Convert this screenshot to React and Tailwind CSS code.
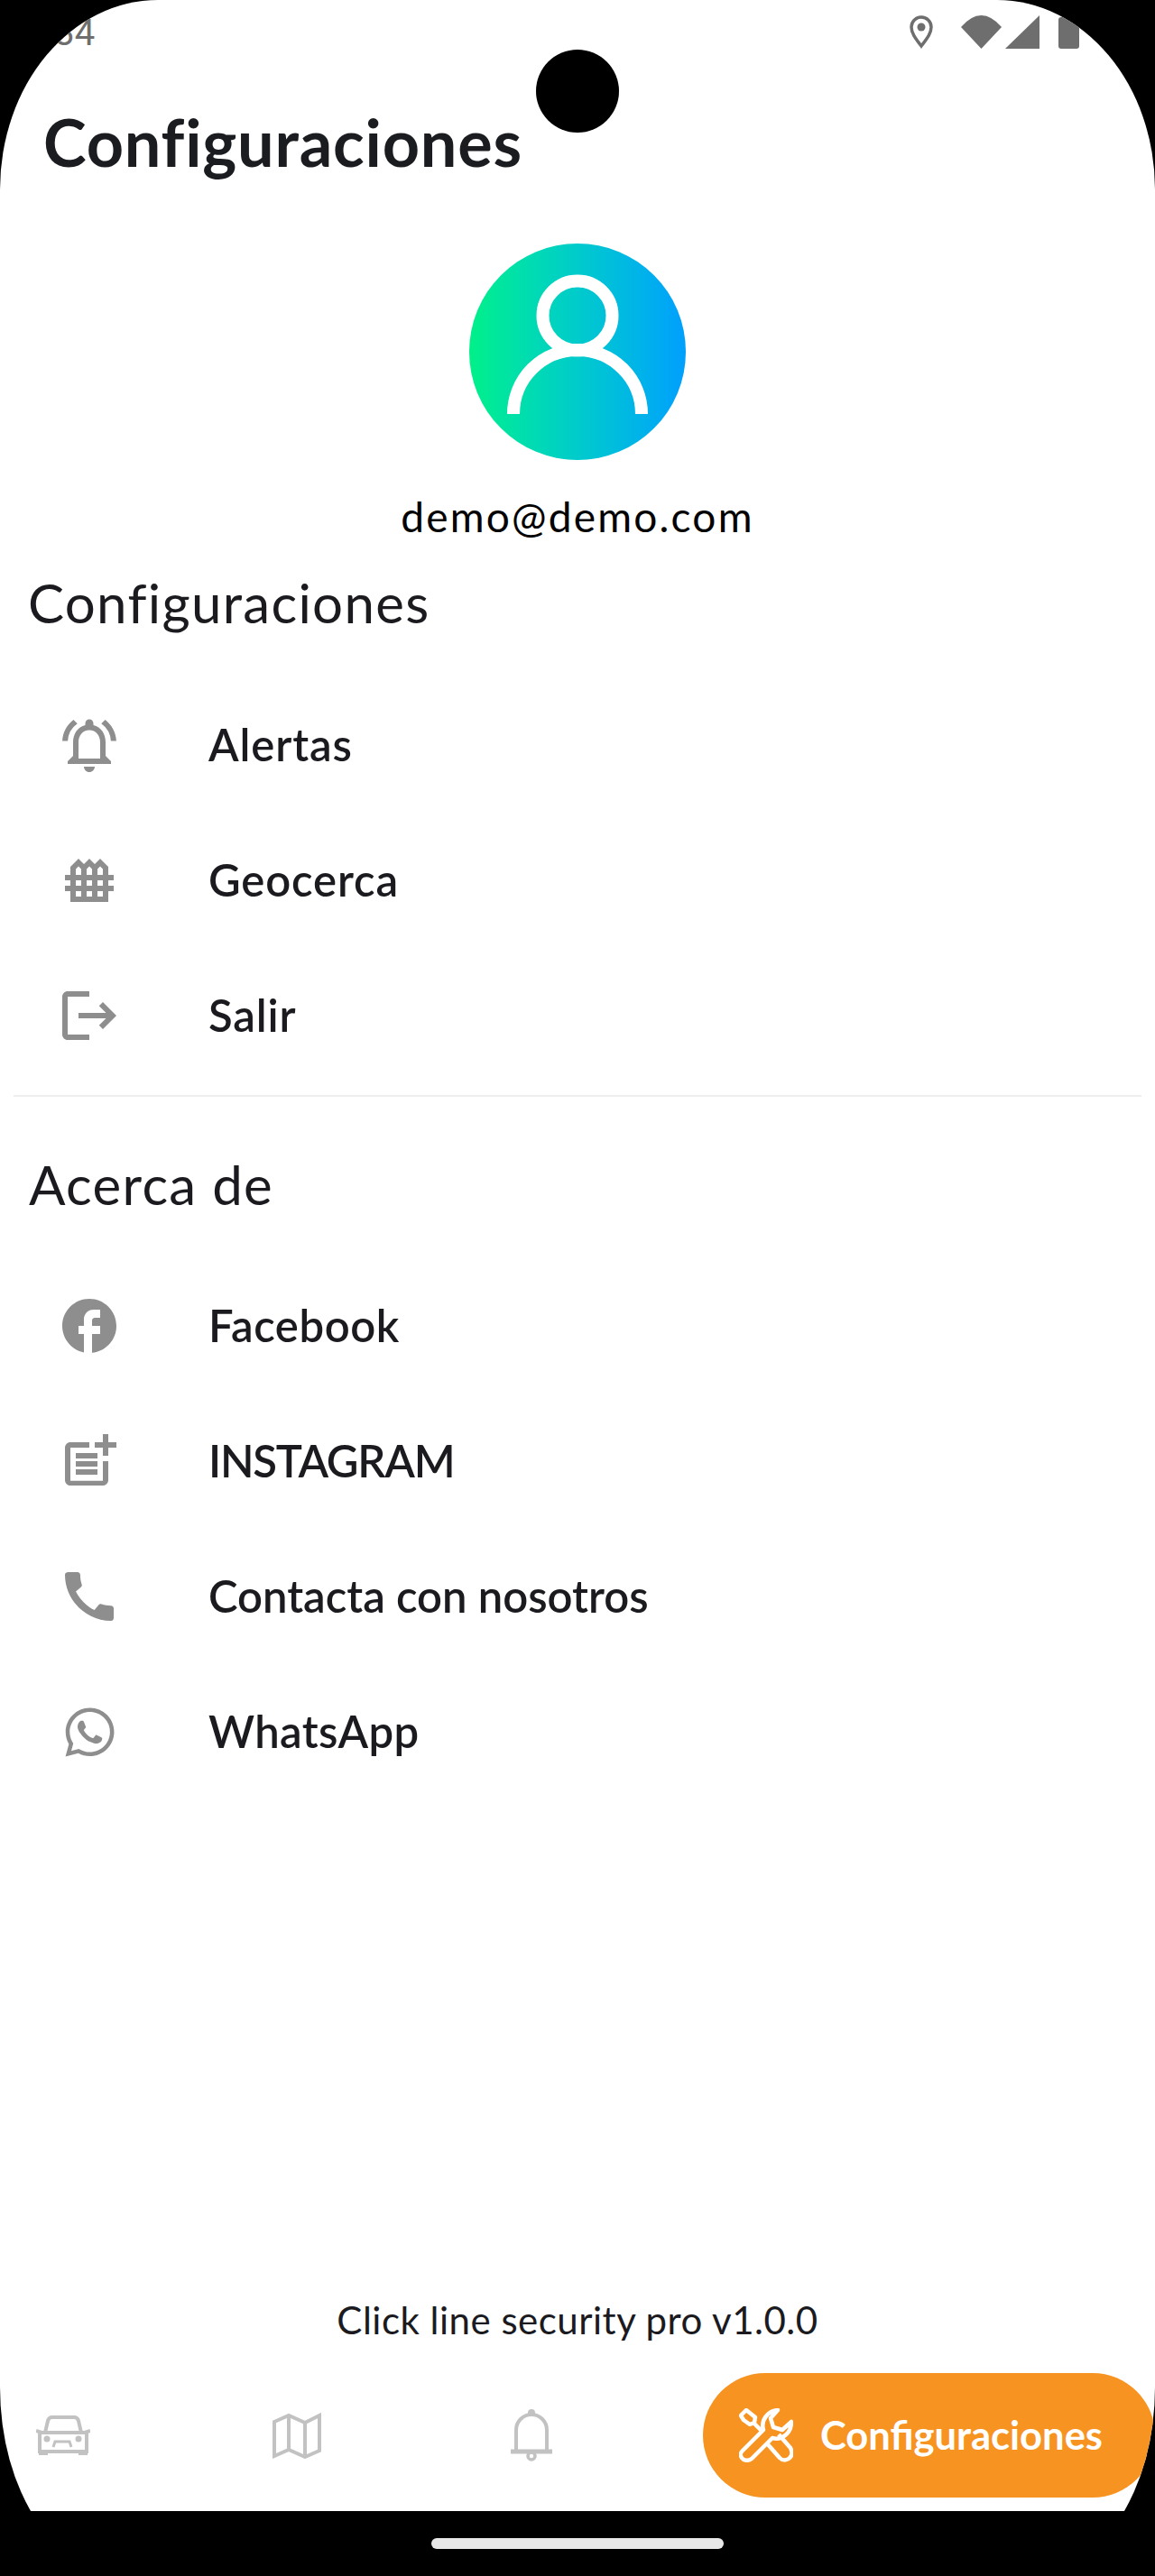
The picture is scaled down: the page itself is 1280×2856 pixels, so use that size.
import React from 'react';
import {
    MdOutlineNotificationsActive,
    MdFence,
    MdLogout,
    MdFacebook,
    MdOutlinePostAdd,
    MdCall,
    MdWhatsapp,
} from 'react-icons/md';

const settingsRows = [
    { label: 'Alertas', Icon: MdOutlineNotificationsActive },
    { label: 'Geocerca', Icon: MdFence },
    { label: 'Salir', Icon: MdLogout },
];

const aboutRows = [
    { label: 'Facebook', Icon: MdFacebook, spacing: 'tracking-[0.6px]' },
    { label: 'INSTAGRAM', Icon: MdOutlinePostAdd, spacing: 'tracking-[-1.2px]' },
    { label: 'Contacta con nosotros', Icon: MdCall, spacing: 'tracking-[0px]' },
    { label: 'WhatsApp', Icon: MdWhatsapp, iconSize: 65, spacing: 'tracking-[0.4px]' },
];

const Row = ({ label, Icon, iconSize = 72, spacing = 'tracking-[0.9px]' }) => (
    <div className="flex h-[150px] items-center pl-[63px]">
        <div className="flex w-[72px] shrink-0 justify-center">
            <Icon size={iconSize} className="text-[#8e8e8e]" />
        </div>
        <span className={`ml-[96px] pb-[2px] text-[49px] leading-[60px] font-semibold text-[#1b1b1f] ${spacing}`}>{label}</span>
    </div>
);

const StatusBar = () => (
    <div className="flex h-[110px] items-start pl-[28px] pr-[84px] pt-[17px] text-[#6e6e6e]">
        <span className="[font-family:Roboto,sans-serif] text-[40px] leading-[40px]">1:34</span>
        <svg viewBox="0 0 26 37" className="ml-auto w-[26px] h-[37px]">
            <path d="M13 34 C7 26 2 20 2 13 A11 11 0 0 1 24 13 C24 20 19 26 13 34Z" fill="none" stroke="#6e6e6e" strokeWidth="3.5" />
            <circle cx="13" cy="13" r="4.5" fill="#6e6e6e" />
        </svg>
        <svg viewBox="0 0 45 37" className="ml-[31px] w-[45px] h-[37px]">
            <path d="M0 13 Q22.5 -13 45 13 L22.5 37Z" fill="#6e6e6e" />
        </svg>
        <svg viewBox="0 0 38 37" className="ml-[4px] w-[38px] h-[37px]">
            <path d="M38 0 V37 H0Z" fill="#6e6e6e" />
        </svg>
        <div className="ml-[21px] mt-[2px] w-[23px] h-[35px] rounded-[3px] bg-[#6e6e6e]" />
    </div>
);

const CarIcon = () => (
    <svg viewBox="0 0 60 44" className="w-[60px] h-[44px]" fill="none" stroke="#c2c2c2" strokeWidth="4">
        <path d="M10 19 L13 6 Q14 2 18 2 H42 Q46 2 47 6 L50 19" />
        <path d="M0 17 L6 19 H54 L60 17" />
        <path d="M4 18 V40 H56 V18" />
        <path d="M3 41 H13 M47 41 H57" strokeWidth="6" />
        <circle cx="12" cy="26" r="3.5" fill="#c2c2c2" stroke="none" />
        <circle cx="47" cy="26" r="3.5" fill="#c2c2c2" stroke="none" />
        <path d="M19 35 L21 29 H37 L39 35" strokeWidth="3" />
    </svg>
);

const MapIcon = () => (
    <svg viewBox="0 0 54 51" className="w-[54px] h-[51px]" fill="none" stroke="#c2c2c2" strokeWidth="4">
        <path d="M2 10 L18 3 L36 11 L52 3 V42 L36 49 L18 41 L2 48Z" />
        <path d="M18 3 V41 M36 11 V49" />
    </svg>
);

const BellIcon = () => (
    <svg viewBox="0 0 46 58" className="w-[46px] h-[58px]" fill="none" stroke="#c2c2c2" strokeWidth="4">
        <circle cx="23" cy="4" r="4" fill="#c2c2c2" stroke="none" />
        <path d="M6 47 V23 A17 17 0 0 1 40 23 V47" />
        <path d="M0 47 H46" strokeWidth="5" />
        <circle cx="23" cy="52" r="4" strokeWidth="3.5" />
    </svg>
);

const ToolsIcon = () => (
    <svg viewBox="0 0 60 60" className="w-[60px] h-[60px] shrink-0" fill="none" stroke="#fff" strokeWidth="4.5" strokeLinejoin="round">
        <path d="M4 47 L27 24 C24 14 31 3 43 2 L35 11 L38 21 L48 24 L58 15 C58 28 47 36 37 33 L14 56 C10 59 5 58 3 55 C1 52 1 50 4 47Z" />
        <path d="M2 8 L8 2 L18 10 L17 16 L12 18 L5 13Z" />
        <path d="M15 15 L26 26" />
        <path d="M44 29 L57 44 C60 50 58 54 55 56 C52 58 48 58 45 55 L31 39" />
    </svg>
);

const App = () => {
    return (
        <div className="h-[2856px] bg-black [font-family:Lato,sans-serif]">
            <div className="relative h-[2784px] overflow-hidden">
                <div className="flex h-[2856px] flex-col bg-white pb-[72px] rounded-tl-[175px_210px] rounded-tr-[175px_210px] rounded-bl-[139px_209px] rounded-br-[139px_209px] overflow-hidden">
                    <StatusBar />

                    <h1 className="flex h-[94px] items-center pl-[48px] text-[72px] font-bold text-[#1b1c20] tracking-[0.8px]">
                        Configuraciones
                    </h1>

                    <div className="mt-[66px] flex flex-col items-center">
                        <div className="h-[240px] w-[240px] rounded-full bg-gradient-to-r from-[#00f088] to-[#009ffd]">
                            <svg viewBox="0 0 240 240" className="h-[240px] w-[240px]" fill="none" stroke="#fff" strokeWidth="14">
                                <circle cx="120" cy="80" r="38.5" />
                                <path d="M49 189 A71 71 0 0 1 191 189" />
                            </svg>
                        </div>
                        <div className="mt-[35px] text-[46px] leading-[56px] text-black tracking-[2.2px]">demo@demo.com</div>
                    </div>

                    <h2 className="mt-[32px] pl-[31px] text-[60px] leading-[70px] text-[#1b1b1f] tracking-[1.3px]">Configuraciones</h2>

                    <div className="mt-[48px]">
                        {settingsRows.map((row) => (
                            <Row key={row.label} {...row} />
                        ))}
                    </div>

                    <div className="mx-[15px] mt-[13px] border-t-2 border-[#eeeeee]" />

                    <h2 className="mt-[62px] pl-[32px] text-[60px] leading-[70px] text-[#1b1b1f] tracking-[1.3px]">Acerca de</h2>

                    <div className="mt-[47px]">
                        {aboutRows.map((row) => (
                            <Row key={row.label} {...row} />
                        ))}
                    </div>

                    <div className="mt-auto text-center text-[42px] leading-[50px] text-[#1b1b1f] tracking-[0.5px]">
                        Click line security pro v1.0.0
                    </div>

                    <div className="mt-[34px] flex h-[138px] items-center">
                        <div className="ml-[40px]"><CarIcon /></div>
                        <div className="ml-[202px]"><MapIcon /></div>
                        <div className="ml-[210px]"><BellIcon /></div>
                        <div className="ml-[167px] flex h-[138px] w-[501px] items-center rounded-full bg-[#f79321] pl-[40px]">
                            <ToolsIcon />
                            <span className="ml-[30px] text-[43.5px] font-bold text-white">Configuraciones</span>
                        </div>
                    </div>
                    <div className="h-[15px]" />
                </div>
                <div className="absolute left-[594px] top-[55px] h-[92px] w-[92px] rounded-full bg-black" />
            </div>
            <div className="flex h-[72px] justify-center pt-[30px]">
                <div className="h-[12px] w-[324px] rounded-full bg-[#e8e8e8]" />
            </div>
        </div>
    );
};

export default App;
